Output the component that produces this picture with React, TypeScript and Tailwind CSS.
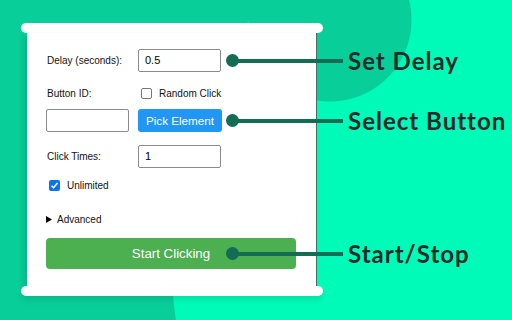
import React from 'react';

const Callout: React.FC<{ label: string }> = ({ label }) => (
  <div className="absolute left-[180px] top-1/2 -translate-y-1/2 flex items-center pointer-events-none">
    <div className="w-[13px] h-[13px] rounded-full bg-[#136c54] shrink-0" />
    <div className="w-[105px] h-[4px] bg-[#136c54] -ml-[1px] shrink-0" />
    <span className="ml-[5px] font-['Lato',sans-serif] font-bold text-[24px] tracking-[1px] leading-none text-[#1d2c2a] whitespace-nowrap">
      {label}
    </span>
  </div>
);

const Box: React.FC<{ value?: string }> = ({ value }) => (
  <div className="w-[83px] h-[23px] border border-[#8a8a8a] rounded-[2px] bg-white flex items-center px-[6px] text-[11px] text-black">
    {value}
  </div>
);

const Check: React.FC<{ checked?: boolean }> = ({ checked }) =>
  checked ? (
    <div className="w-[11px] h-[11px] rounded-[2px] bg-[#0b74f5] flex items-center justify-center">
      <svg viewBox="0 0 12 12" className="w-[9px] h-[9px]">
        <path d="M2 6.3 L4.8 9 L10 2.8" fill="none" stroke="white" strokeWidth="2" />
      </svg>
    </div>
  ) : (
    <div className="w-[11px] h-[11px] rounded-[2px] border border-[#767676] bg-white" />
  );

export default function App() {
  return (
    <div className="w-[512px] h-[320px] overflow-hidden bg-[#08cf99] bg-[radial-gradient(circle_at_330px_20px,#08cf99_81px,transparent_82px),radial-gradient(circle_at_580px_260px,#00fbb8_408px,transparent_409px)] pt-[23px] pl-[21px] font-['Liberation_Sans',Arial,sans-serif]">
      <div className="w-[302px] flex flex-col">
        <div className="h-[10px] rounded-full bg-white" />
        <div className="ml-[6px] w-[290px] bg-white border-r border-[#4a6d62] shadow-[-4px_3px_6px_rgba(0,0,0,0.12)] pl-[19px] pt-[16px] pb-[17px] flex flex-col text-[10px] text-[#111]">
          <div className="relative flex items-center h-[23px]">
            <span className="w-[92px] pl-[1px]">Delay (seconds):</span>
            <Box value="0.5" />
            <Callout label="Set Delay" />
          </div>

          <div className="flex items-center h-[14px] mt-[14px]">
            <span className="w-[92px] pl-[1px]">Button ID:</span>
            <div className="ml-[3px] flex items-center">
              <Check />
              <span className="ml-[7px]">Random Click</span>
            </div>
          </div>

          <div className="relative flex items-center h-[23px] mt-[9px]">
            <Box />
            <button className="ml-[9px] w-[84px] h-[23px] rounded-[3px] bg-[#2196f3] text-white text-[11.7px]">
              Pick Element
            </button>
            <Callout label="Select Button" />
          </div>

          <div className="flex items-center h-[23px] mt-[13px]">
            <span className="w-[92px] pl-[1px]">Click Times:</span>
            <Box value="1" />
          </div>

          <div className="flex items-center h-[14px] mt-[10px] pl-[3px]">
            <Check checked />
            <span className="ml-[7px]">Unlimited</span>
          </div>

          <div className="flex items-center h-[14px] mt-[20px]">
            <svg viewBox="0 0 6 7" className="w-[6px] h-[7px]">
              <polygon points="0,0 6,3.5 0,7" fill="#000" />
            </svg>
            <span className="ml-[5px]">Advanced</span>
          </div>

          <div className="relative mt-[12px]">
            <button className="w-[250px] h-[31px] rounded-[4px] bg-[#4caf50] text-white text-[13.3px]">
              Start Clicking
            </button>
            <Callout label="Start/Stop" />
          </div>
        </div>
        <div className="h-[10px] rounded-full bg-white shadow-[0_4px_6px_rgba(0,0,0,0.1)]" />
      </div>
    </div>
  );
}
